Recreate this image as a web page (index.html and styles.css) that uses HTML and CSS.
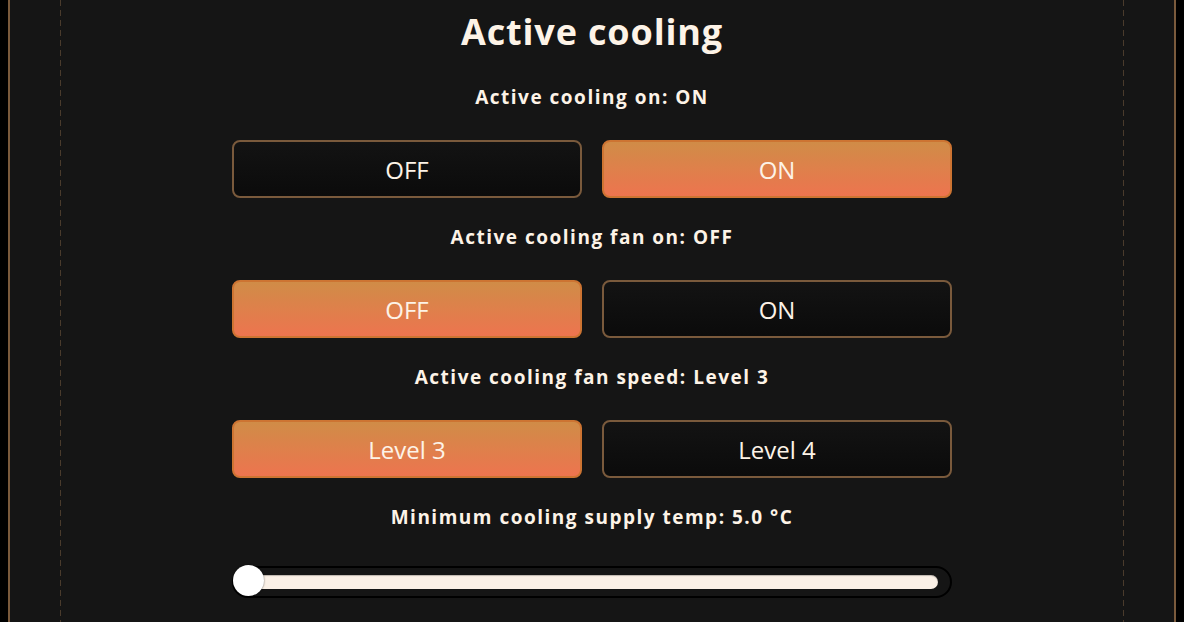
FILE: index.html
```html
<!DOCTYPE html>
<html lang="en">
<head>
    <meta charset="UTF-8">
    <meta name="viewport" content="width=device-width, initial-scale=1.0">
    <title>Active cooling</title>
    <link rel="stylesheet" href="styles.css">
</head>
<body>
    <div class="panel">
        <div class="inner">
            <h1>Active cooling</h1>

            <div class="setting">
                <p class="label">Active cooling on: ON</p>
                <div class="choices">
                    <button class="choice">OFF</button>
                    <button class="choice active">ON</button>
                </div>
            </div>

            <div class="setting">
                <p class="label">Active cooling fan on: OFF</p>
                <div class="choices">
                    <button class="choice active">OFF</button>
                    <button class="choice">ON</button>
                </div>
            </div>

            <div class="setting">
                <p class="label">Active cooling fan speed: Level 3</p>
                <div class="choices">
                    <button class="choice active">Level 3</button>
                    <button class="choice">Level 4</button>
                </div>
            </div>

            <div class="setting">
                <p class="label">Minimum cooling supply temp: 5.0 °C</p>
                <div class="slider">
                    <div class="track"></div>
                    <div class="thumb"></div>
                </div>
            </div>
        </div>
    </div>
</body>
</html>
```

FILE: styles.css
```css
/* General Styling */
body {
    margin: 0;
    padding: 0 8px;
    background: #000;
    font-family: "Open Sans", sans-serif;
    color: #fdf3e7;
    height: 622px;
    overflow: hidden;
}
.panel {
    background: #151515;
    border-left: 2px solid #7a5a3c;
    border-right: 2px solid #7a5a3c;
    height: 100%;
}
/* Dashed guides, 6px dash / 4px gap */
.inner {
    margin: 0 50px;
    height: 100%;
    background:
        repeating-linear-gradient(#4a3b2c 0 6px, transparent 6px 10px) left top / 1px 100% no-repeat,
        repeating-linear-gradient(#4a3b2c 0 6px, transparent 6px 10px) right top / 1px 100% no-repeat;
    display: flex;
    flex-direction: column;
    align-items: center;
}
/* Headings */
h1 {
    margin: 8px 0 2px;
    font-size: 36px;
    line-height: 48px;
    font-weight: 700;
    letter-spacing: 0.85px;
}
.setting {
    width: 720px;
}
.label {
    margin: 27px 0 31px;
    text-align: center;
    font-size: 19px;
    line-height: 24px;
    font-weight: 700;
    letter-spacing: 1.5px;
}
/* Buttons */
.choices {
    display: flex;
    gap: 20px;
}
.choice {
    flex: 1;
    height: 58px;
    border: 2px solid #7a5a3c;
    border-radius: 8px;
    background: linear-gradient(#131313, #0b0b0b);
    color: #fdf3e7;
    font-family: "Open Sans", sans-serif;
    font-size: 24px;
    cursor: pointer;
}
.choice.active {
    border-color: #cd7432;
    background: linear-gradient(#d08c47, #ed744f);
}
/* Slider */
.slider {
    position: relative;
    margin-top: 37px;
    height: 32px;
    border: 2px solid #000;
    border-radius: 18px;
    box-sizing: border-box;
    display: flex;
    align-items: center;
    padding: 0 12px 0 14px;
}
.track {
    flex: 1;
    height: 14px;
    border-radius: 7px;
    background: #faf0e6;
    box-shadow: inset 0 1px 1px rgba(0, 0, 0, 0.25);
}
.thumb {
    position: absolute;
    left: -1px;
    top: 50%;
    width: 31px;
    height: 31px;
    margin-top: -17px;
    border-radius: 50%;
    background: #fff;
    box-shadow: 0 0 2px rgba(0, 0, 0, 0.6);
}
```
